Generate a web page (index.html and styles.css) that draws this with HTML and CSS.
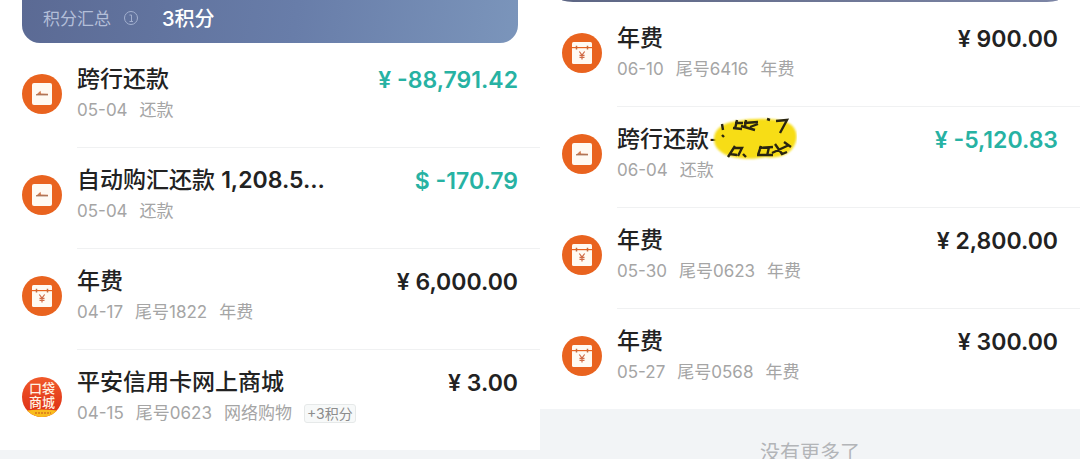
FILE: index.html
```html
<!DOCTYPE html>
<html lang="zh-CN">
    <head>
        <meta charset="UTF-8">
        <meta name="viewport" content="width=device-width, initial-scale=1.0">
        <title>账单明细</title>
        <link rel="stylesheet" href="styles.css">
    </head>
    <body>
        <!-- shared row icons -->
        <svg class="defs" width="0" height="0" aria-hidden="true">
            <symbol id="icon-repay" viewBox="0 0 40 40">
                <circle cx="20" cy="20" r="20" fill="#e9631f"/>
                <rect x="10" y="9" width="20" height="22" rx="2" fill="#fffaf2"/>
                <path d="M14 21 L18.500 16.800 L19 19.500 L26 19.800 L26 21 Z" fill="#d07c50"/>
                <path d="M14 20.800 H26" stroke="#a87458" stroke-width="1.200"/>
            </symbol>
            <symbol id="icon-fee" viewBox="0 0 40 40">
                <circle cx="20" cy="20" r="20" fill="#e9631f"/>
                <rect x="10" y="9" width="20" height="22" rx="1.500" fill="#fffaf2"/>
                <path d="M10 14.600 H30" stroke="#e9631f" stroke-width="1.200"/>
                <path d="M14.500 12.800 V16.400 M25.500 12.800 V16.400" stroke="#c46a3c" stroke-width="1.500"/>
                <path d="M17.300 18.500 L20 22 L22.700 18.500 M20 22 V26.500 M17.500 22.300 H22.500 M17.500 24.400 H22.500" fill="none" stroke="#cf6a45" stroke-width="1.200"/>
            </symbol>
        </svg>

        <main class="screens">
            <section class="screen">
                <header class="points">
                    <span class="points-label">积分汇总</span>
                    <svg class="info" viewBox="0 0 16 16" aria-hidden="true">
                        <circle cx="8" cy="8" r="6.500"/>
                        <path d="M6.500 5 H8.500 V11.500 M6.500 11.500 H10"/>
                    </svg>
                    <strong class="points-value">3积分</strong>
                </header>
                <ul class="bills">
                    <li class="bill">
                        <svg class="icon"><use href="#icon-repay"/></svg>
                        <div class="bill-body">
                            <div class="bill-text">
                                <h2>跨行还款</h2>
                                <p><span>05-04</span><span>还款</span></p>
                            </div>
                            <span class="amount income">¥ -88,791.42</span>
                        </div>
                    </li>
                    <li class="bill">
                        <svg class="icon"><use href="#icon-repay"/></svg>
                        <div class="bill-body">
                            <div class="bill-text">
                                <h2>自动购汇还款 <b>1,208.5...</b></h2>
                                <p><span>05-04</span><span>还款</span></p>
                            </div>
                            <span class="amount income">$ -170.79</span>
                        </div>
                    </li>
                    <li class="bill">
                        <svg class="icon"><use href="#icon-fee"/></svg>
                        <div class="bill-body">
                            <div class="bill-text">
                                <h2>年费</h2>
                                <p><span>04-17</span><span>尾号1822</span><span>年费</span></p>
                            </div>
                            <span class="amount">¥ 6,000.00</span>
                        </div>
                    </li>
                    <li class="bill">
                        <svg class="icon" viewBox="0 0 40 40">
                            <defs>
                                <linearGradient id="mall-red" x1="0" y1="0" x2="0" y2="1">
                                    <stop offset="0" stop-color="#f0592a"/>
                                    <stop offset="1" stop-color="#dc2c14"/>
                                </linearGradient>
                                <clipPath id="mall-clip"><circle cx="20" cy="20" r="20"/></clipPath>
                            </defs>
                            <g clip-path="url(#mall-clip)">
                                <rect width="40" height="40" fill="url(#mall-red)"/>
                                <path d="M0 34 Q20 31 40 34 V40 H0 Z" fill="#f9bd1e"/>
                                <path d="M13 36 H29" stroke="#d8761c" stroke-width="1.500" stroke-dasharray="2 1"/>
                            </g>
                            <text class="mall-text" x="20" y="16">口袋</text>
                            <text class="mall-text" x="20" y="30">商城</text>
                        </svg>
                        <div class="bill-body">
                            <div class="bill-text">
                                <h2>平安信用卡网上商城</h2>
                                <p><span>04-15</span><span>尾号0623</span><span>网络购物</span><span class="tag">+3积分</span></p>
                            </div>
                            <span class="amount">¥ 3.00</span>
                        </div>
                    </li>
                </ul>
            </section>

            <section class="screen">
                <header class="points points-cut"></header>
                <ul class="bills">
                    <li class="bill">
                        <svg class="icon"><use href="#icon-fee"/></svg>
                        <div class="bill-body">
                            <div class="bill-text">
                                <h2>年费</h2>
                                <p><span>06-10</span><span>尾号6416</span><span>年费</span></p>
                            </div>
                            <span class="amount">¥ 900.00</span>
                        </div>
                    </li>
                    <li class="bill">
                        <svg class="icon"><use href="#icon-repay"/></svg>
                        <div class="bill-body">
                            <div class="bill-text">
                                <h2 class="marked">跨行还款-
                                    <!-- highlighter patch over the payer name -->
                                    <svg class="marker" viewBox="0 0 84 44" aria-hidden="true">
                                        <defs>
                                            <filter id="soft" x="-10%" y="-10%" width="120%" height="120%"><feGaussianBlur stdDeviation="1"/></filter>
                                        </defs>
                                        <path d="M1 22 C1 12 11 5 25 4 C42 1 61 1 73 5 C84 9 86 20 81 29 C76 38 65 42 52 40 C40 43 23 42 13 38 C5 34 1 29 1 22 Z" fill="#f7dd16" filter="url(#soft)"/>
                                        <g fill="none" stroke="#292510" stroke-width="2.400">
                                            <path d="M9 7 L10 13 M9 18 L11 20"/>
                                            <path d="M24 3 L22 12 M20 11 L29 12 M22 6 L30 6 M28 9 L42 13 M33 3 L32 10 M31 6 L45 5 M37 10 L45 7"/>
                                            <path d="M54 2 L57 3 M63 4 L74 3 L67 16"/>
                                            <path d="M22 29 L15 40 M20 31 L29 31 L25 39 M17 37 L24 38 M30 37 L33 40"/>
                                            <path d="M48 29 L45 38 M46 31 L60 30 M56 30 L54 39 M44 38 L60 38 M62 27 L69 37 L74 35 M59 36 L76 28 M71 25 L78 30"/>
                                        </g>
                                    </svg>
                                </h2>
                                <p><span>06-04</span><span>还款</span></p>
                            </div>
                            <span class="amount income">¥ -5,120.83</span>
                        </div>
                    </li>
                    <li class="bill">
                        <svg class="icon"><use href="#icon-fee"/></svg>
                        <div class="bill-body">
                            <div class="bill-text">
                                <h2>年费</h2>
                                <p><span>05-30</span><span>尾号0623</span><span>年费</span></p>
                            </div>
                            <span class="amount">¥ 2,800.00</span>
                        </div>
                    </li>
                    <li class="bill">
                        <svg class="icon"><use href="#icon-fee"/></svg>
                        <div class="bill-body">
                            <div class="bill-text">
                                <h2>年费</h2>
                                <p><span>05-27</span><span>尾号0568</span><span>年费</span></p>
                            </div>
                            <span class="amount">¥ 300.00</span>
                        </div>
                    </li>
                </ul>
                <footer class="no-more">没有更多了</footer>
            </section>
        </main>
    </body>
</html>
```
FILE: styles.css
```css
* {
    box-sizing: border-box;
}
body {
    margin: 0;
    background-color: #f2f4f6;
    color: #222;
    font-family: Inter, "Noto Sans CJK SC", sans-serif;
}
h2, p, ul {
    margin: 0;
    padding: 0;
}
.defs {
    position: absolute;
}
.screens {
    display: grid;
    grid-template-columns: 1fr 1fr;
    height: 100vh;
    overflow: hidden;
}
.screen {
    background: linear-gradient(#fff, #fff) top / 100% 60px no-repeat;
}

/* Points summary card */
.points {
    display: flex;
    align-items: center;
    height: 43px;
    margin: 0 22px;
    padding: 0 21px 8px;
    border-radius: 0 0 18px 18px;
    background: linear-gradient(100deg, #5b6a94, #687da9 55%, #7b95bb);
    color: #fff;
}
.points-label {
    color: #b3bed8;
    font-size: 17px;
}
.info {
    width: 16px;
    height: 16px;
    margin: 0 23px 0 12px;
    fill: none;
    stroke: #a3b0cf;
}
.points-value {
    font-size: 20px;
    font-weight: 500;
}
.points-cut {
    height: 2px;
    padding: 0;
    border-radius: 0 0 18px 18px / 0 0 2px 2px;
    background: linear-gradient(90deg, #5d6684, #7c85a5);
}

/* Transactions */
.bills {
    padding-top: 4px;
    background-color: #fff;
    list-style: none;
}
.bill {
    display: flex;
    padding-left: 22px;
}
.icon {
    flex: none;
    width: 40px;
    height: 40px;
    margin: 27px 15px 0 0;
}
.mall-text {
    fill: #fff3e4;
    font-size: 13px;
    font-weight: 500;
    text-anchor: middle;
}
.bill-body {
    display: flex;
    flex: 1;
    justify-content: space-between;
    min-height: 101px;
    padding: 16px 22px 0 0;
    border-bottom: 1px solid #f0f1f2;
}
.bill:last-child .bill-body {
    min-height: 100px;
    border-bottom: none;
}
.bill-text h2 {
    font-size: 23px;
    font-weight: 500;
    line-height: 32px;
}
.bill-text b {
    font-weight: 600;
}
.bill-text p {
    display: flex;
    align-items: center;
    gap: 12px;
    color: #a5a5a5;
    font-size: 17px;
    line-height: 30px;
}
.bill-text .tag {
    padding: 0 2px;
    border: 1px solid #e6e9e9;
    border-radius: 3px;
    background-color: #f7f9f9;
    color: #8c8c8c;
    font-size: 14px;
    line-height: 17px;
}
.amount {
    font-size: 23px;
    font-weight: 600;
    line-height: 34px;
    white-space: nowrap;
}
.income {
    color: #27b2a3;
}
.marked {
    position: relative;
}
.marker {
    position: absolute;
    top: -6px;
    left: 96px;
    width: 84px;
    height: 44px;
}
.no-more {
    padding-top: 30px;
    color: #b3b5b8;
    font-size: 20px;
    line-height: 28px;
    text-align: center;
}
```
